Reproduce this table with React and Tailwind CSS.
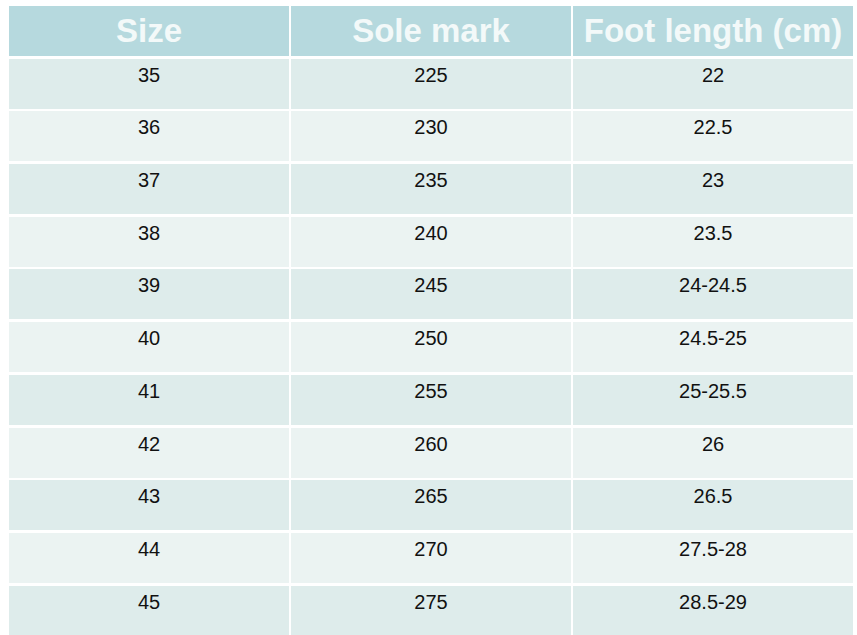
const rows = [
  ["35", "225", "22"],
  ["36", "230", "22.5"],
  ["37", "235", "23"],
  ["38", "240", "23.5"],
  ["39", "245", "24-24.5"],
  ["40", "250", "24.5-25"],
  ["41", "255", "25-25.5"],
  ["42", "260", "26"],
  ["43", "265", "26.5"],
  ["44", "270", "27.5-28"],
  ["45", "275", "28.5-29"],
];

const headers = ["Size", "Sole mark", "Foot length (cm)"];

export default function App() {
  return (
    <div
      className="min-h-[635px] w-[857px] overflow-hidden bg-white pl-[9px] pt-[6px]"
      style={{ fontFamily: '"Liberation Sans", Arial, sans-serif' }}
    >
      <div className="grid w-[844px] grid-cols-3 gap-x-[2px] gap-y-[2.7px]">
        {headers.map((h) => (
          <div
            key={h}
            className="flex h-[50px] items-center justify-center bg-[#b6d9de] text-[33px] font-bold text-[#f3f9f9]"
          >
            {h}
          </div>
        ))}
        {rows.map((row, i) =>
          row.map((cell, j) => (
            <div
              key={`${i}-${j}`}
              className={`h-[50px] pt-[5px] text-center text-[20px] leading-[23px] text-[#111] ${
                i % 2 === 0 ? "bg-[#deeceb]" : "bg-[#ebf3f2]"
              }`}
            >
              {cell}
            </div>
          ))
        )}
      </div>
    </div>
  );
}
